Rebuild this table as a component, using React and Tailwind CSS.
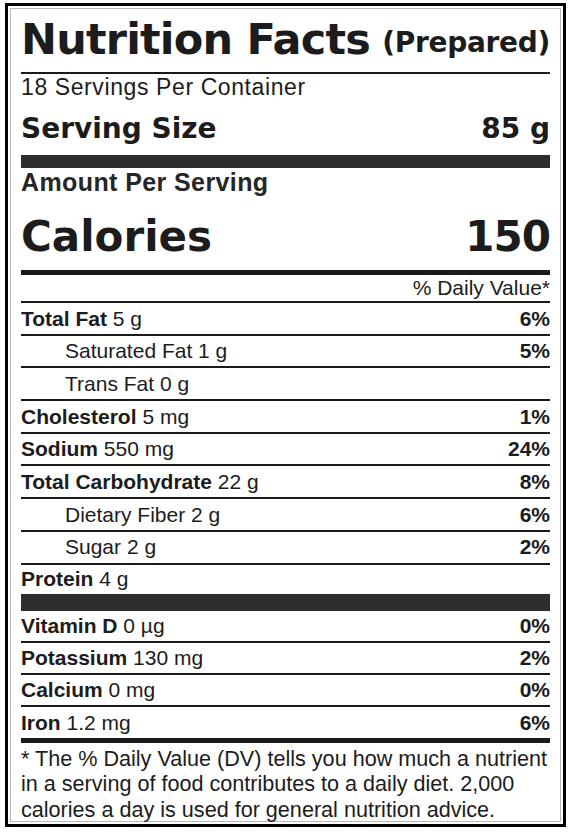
const nutrients = [
  { name: "Total Fat", amount: "5 g", dv: "6%" },
  { name: "Saturated Fat", amount: "1 g", dv: "5%", sub: true },
  { name: "Trans Fat", amount: "0 g", sub: true },
  { name: "Cholesterol", amount: "5 mg", dv: "1%" },
  { name: "Sodium", amount: "550 mg", dv: "24%" },
  { name: "Total Carbohydrate", amount: "22 g", dv: "8%" },
  { name: "Dietary Fiber", amount: "2 g", dv: "6%", sub: true },
  { name: "Sugar", amount: "2 g", dv: "2%", sub: true },
];

const minerals = [
  { name: "Vitamin D", amount: "0 µg", dv: "0%" },
  { name: "Potassium", amount: "130 mg", dv: "2%" },
  { name: "Calcium", amount: "0 mg", dv: "0%" },
];

const Row = ({ name, amount, dv, sub, last, h = "h-[32.7px]" }) => (
  <div
    className={`flex shrink-0 ${h} items-center justify-between ${
      last ? "" : "border-b-2 border-[#1a1a1a]"
    } ${sub ? "pl-[44px]" : ""}`}
  >
    <span>
      <span className={sub ? "" : "font-bold"}>{name}</span> {amount}
    </span>
    {dv && <span className="font-bold">{dv}</span>}
  </div>
);

const App = () => {
  return (
    <div className="h-[834px] w-[570px] bg-white pt-[3px] pl-[5px] text-[#1c1c1c] font-['Liberation_Sans',Arial,sans-serif]">
      <div className="h-[824px] w-[561px] border-[3px] border-black p-[2px]">
        <div className="flex h-full flex-col border border-[#b8b8b8] px-[10px]">

          {/* title */}
          <div className="flex h-[65px] shrink-0 items-end justify-between border-b-2 border-[#1a1a1a] pb-[11px] font-['DejaVu_Sans',sans-serif] font-bold">
            <span className="text-[43px] leading-none tracking-[-0.8px]">Nutrition Facts</span>
            <span className="pb-[4px] text-[28px] leading-none tracking-[-0.3px]">(Prepared)</span>
          </div>

          <div className="flex h-[26px] shrink-0 items-center text-[23px] tracking-[0.6px]">
            18 Servings Per Container
          </div>

          <div className="flex h-[55px] shrink-0 items-center justify-between pt-[2px] font-['DejaVu_Sans',sans-serif] text-[28px] font-bold">
            <span>Serving Size</span>
            <span>85 g</span>
          </div>

          <div className="h-[13px] shrink-0 bg-[#2e2e2e]" />

          <div className="flex h-[30px] shrink-0 items-center text-[25px] font-bold tracking-[0.4px] text-[#262626]">
            Amount Per Serving
          </div>

          <div className="flex h-[72px] shrink-0 items-center justify-between pt-[6px] font-['DejaVu_Sans',sans-serif] text-[42px] font-bold leading-none">
            <span>Calories</span>
            <span className="tracking-[-1px]">150</span>
          </div>

          <div className="h-[5px] shrink-0 bg-[#1a1a1a]" />

          <div className="flex h-[28px] shrink-0 items-center justify-end border-b-2 border-[#1a1a1a] text-[21px]">
            % Daily Value*
          </div>

          <div className="flex shrink-0 flex-col text-[21px]">
            {nutrients.map((n) => (
              <Row key={n.name} {...n} />
            ))}
            <Row name="Protein" amount="4 g" last h="h-[29.4px]" />
          </div>

          <div className="h-[17px] shrink-0 bg-[#2e2e2e]" />

          <div className="flex shrink-0 flex-col text-[21px]">
            {minerals.map((n) => (
              <Row key={n.name} {...n} h="h-[32px]" />
            ))}
            <Row name="Iron" amount="1.2 mg" dv="6%" last h="h-[31px]" />
          </div>

          <div className="h-[5px] shrink-0 bg-[#1a1a1a]" />

          <div className="min-h-0 flex-1 pt-[3px] text-[21.6px] leading-[25.5px]">
            <div className="whitespace-nowrap">* The % Daily Value (DV) tells you how much a nutrient</div>
            <div className="whitespace-nowrap">in a serving of food contributes to a daily diet. 2,000</div>
            <div className="whitespace-nowrap">calories a day is used for general nutrition advice.</div>
          </div>

        </div>
      </div>
    </div>
  );
};

export default App;
